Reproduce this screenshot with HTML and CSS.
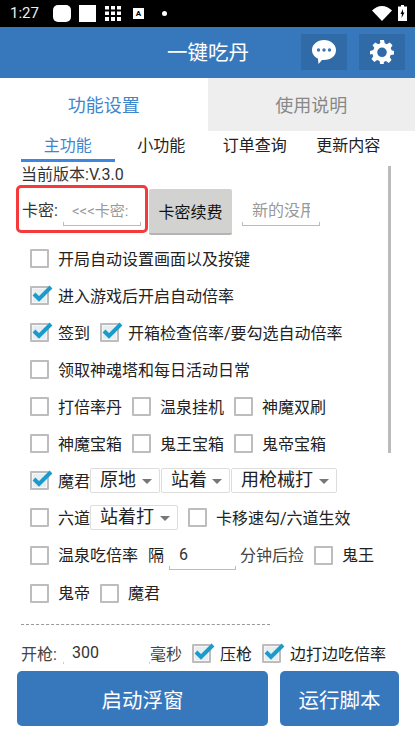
FILE: index.html
```html
<!DOCTYPE html>
<html lang="zh">
<head>
    <meta charset="UTF-8">
    <title>一键吃丹</title>
    <link rel="stylesheet" href="styles.css">
</head>
<body>
    <div id="app">
        <div class="status-bar">
            <span class="clock">1:27</span>
            <span class="st-round"></span>
            <span class="st-square"></span>
            <svg class="st-grid" width="16" height="15" viewBox="0 0 16 15">
                <path fill="#fff" d="M0 0h4v3.500H0zM6 0h4v3.500H6zM12 0h4v3.500h-4zM0 5.500h4V9H0zM6 5.500h4V9H6zM12 5.500h4V9h-4zM0 11h4v4H0zM6 11h4v4H6zM12 11h4v4h-4z"/>
            </svg>
            <span class="st-a">A</span>
            <span class="st-dot"></span>
            <span class="st-space"></span>
            <svg width="20" height="15" viewBox="0 0 20 15">
                <path fill="#fff" d="M0 4.500C2.800 1.800 6.200 0 10 0s7.200 1.800 10 4.500L10 15z"/>
            </svg>
            <svg class="st-batt" width="9" height="16" viewBox="0 0 9 16">
                <path fill="#fff" d="M3 0h3v1.500h3V16H0V1.500h3z"/>
                <path fill="#000" d="M5 4 2.500 9H4l-.5 4L6.500 7.500H5z"/>
            </svg>
        </div>

        <div class="app-bar">
            <div class="app-title">一键吃丹</div>
            <div class="app-btn msg-btn">
                <svg width="26" height="26" viewBox="0 0 26 26">
                    <path fill="#fff" d="M13 1c6.600 0 12 4.300 12 10.200S19.600 21 13 21c-.7 0-1.300 0-2-.1L7.500 25l-.6-5.400C3.400 17.800 1 14.800 1 11.200 1 5.300 6.400 1 13 1z"/>
                    <circle cx="7.500" cy="11" r="1.700" fill="#3778bd"/>
                    <circle cx="13" cy="11" r="1.700" fill="#3778bd"/>
                    <circle cx="18.500" cy="11" r="1.700" fill="#3778bd"/>
                </svg>
            </div>
            <div class="app-btn">
                <svg width="24" height="24" viewBox="0 0 24 24">
                    <path fill="#fff" fill-rule="evenodd" d="M10 0h4l.7 3.300 2.200.9L19.700 2.400l2.800 2.800-1.800 2.800.9 2.200L24 11v3.400l-3.300.7-.9 2.200 1.800 2.800-2.800 2.800-2.800-1.800-2.200.9L13.800 24h-3.600l-.7-3-2.400-.9-2.800 1.800-2.800-2.800 1.800-2.800-.9-2.200L0 14.400V11l3.400-1 .9-2.200-1.800-2.600 2.800-2.800 2.800 1.800 2.200-.9zM12 7.500a4.800 4.800 0 1 0 0 9.600 4.800 4.800 0 0 0 0-9.600z"/>
                </svg>
            </div>
        </div>

        <div class="tabs">
            <div class="tab active">功能设置</div>
            <div class="tab off">使用说明</div>
        </div>

        <div class="subtabs">
            <div class="subtab active">主功能</div>
            <div class="subtab">小功能</div>
            <div class="subtab">订单查询</div>
            <div class="subtab">更新内容</div>
        </div>

        <div class="panel">
            <div class="scrollbar"></div>
            <div class="version">当前版本:V.3.0</div>

            <div class="card-row">
                <div class="red-box">
                    <span>卡密:</span>
                    <span class="field field-card hint">&lt;&lt;&lt;卡密:</span>
                </div>
                <div class="renew">卡密续费</div>
                <span class="field field-new hint"><span class="clip">新的没用</span></span>
            </div>

            <div class="row"><i class="cb"></i><span>开局自动设置画面以及按键</span></div>
            <div class="row"><i class="cb on"></i><span>进入游戏后开启自动倍率</span></div>
            <div class="row">
                <i class="cb on"></i><span>签到</span>
                <i class="cb on"></i><span>开箱检查倍率/要勾选自动倍率</span>
            </div>
            <div class="row"><i class="cb"></i><span>领取神魂塔和每日活动日常</span></div>
            <div class="row">
                <i class="cb"></i><span class="w4">打倍率丹</span>
                <i class="cb"></i><span class="w4">温泉挂机</span>
                <i class="cb"></i><span>神魔双刷</span>
            </div>
            <div class="row">
                <i class="cb"></i><span class="w4">神魔宝箱</span>
                <i class="cb"></i><span class="w4">鬼王宝箱</span>
                <i class="cb"></i><span>鬼帝宝箱</span>
            </div>
            <div class="row">
                <i class="cb on"></i><span>魔君</span>
                <div class="selects">
                    <div class="sel s1">原地</div>
                    <div class="sel s2">站着</div>
                    <div class="sel s3">用枪械打</div>
                </div>
            </div>
            <div class="row">
                <i class="cb"></i><span>六道</span>
                <div class="selects">
                    <div class="sel s4">站着打</div>
                </div>
                <i class="cb cb-after"></i><span>卡移速勾/六道生效</span>
            </div>
            <div class="row row-38">
                <i class="cb"></i><span>温泉吃倍率</span>
                <span class="gap-l">隔</span>
                <span class="field field-num">6</span>
                <span class="muted">分钟后捡</span>
                <i class="cb"></i><span>鬼王</span>
            </div>
            <div class="row row-38">
                <i class="cb"></i><span>鬼帝</span>
                <i class="cb"></i><span>魔君</span>
            </div>

            <div class="divider"></div>

            <div class="row fire">
                <span class="muted">开枪:</span>
                <span class="field-fire">300</span>
                <span class="muted">毫秒</span>
                <i class="cb on"></i><span>压枪</span>
                <i class="cb on"></i><span>边打边吃倍率</span>
            </div>
        </div>

        <div class="actions">
            <div class="action wide">启动浮窗</div>
            <div class="action">运行脚本</div>
        </div>
    </div>
</body>
</html>
```

FILE: styles.css
```css
* {
    box-sizing: border-box;
}

body {
    margin: 0;
    background: #fff;
    color: #222;
    font-family: Roboto, "Noto Sans CJK SC", sans-serif;
    font-size: 16px;
}

#app {
    width: 415px;
    height: 736px;
    overflow: hidden;
    display: flex;
    flex-direction: column;
}

/* status bar */
.status-bar {
    flex: none;
    height: 27px;
    background: #000;
    color: #fff;
    display: flex;
    align-items: center;
    padding: 0 8px 1px 10px;
}

.clock {
    width: 43px;
    font-size: 15px;
    color: #eee;
}

.st-round {
    width: 18px;
    height: 17px;
    border-radius: 5px;
    background: #fff;
    margin-right: 8px;
}

.st-square {
    width: 17px;
    height: 17px;
    background: #fff;
    margin-right: 9px;
}

.st-a {
    width: 11px;
    height: 11px;
    margin-left: 12px;
    background: #fff;
    color: #000;
    font-size: 8px;
    font-weight: bold;
    line-height: 11px;
    text-align: center;
}

.st-dot {
    width: 5px;
    height: 5px;
    border-radius: 50%;
    background: #fff;
    margin-left: 18px;
}

.st-space {
    flex: 1;
}

.st-batt {
    margin-left: 6px;
}

/* header */
.app-bar {
    flex: none;
    height: 51px;
    background: #3778bd;
    display: flex;
    align-items: center;
    padding: 0 0 2px 167px;
}

.app-title {
    flex: none;
    width: 134px;
    color: #fff;
    font-size: 20.500px;
    padding-bottom: 2px;
}

.app-btn {
    flex: none;
    width: 46px;
    height: 36px;
    margin-right: 12px;
    background: #306ba8;
    display: flex;
    align-items: center;
    justify-content: center;
}

.app-btn:last-child {
    margin-right: 0;
}

.msg-btn svg {
    margin-top: 1px;
}

/* tabs */
.tabs {
    flex: none;
    height: 53px;
    display: flex;
}

.tab {
    flex: 1;
    font-size: 18px;
    display: flex;
    align-items: center;
    justify-content: center;
    padding-bottom: 1px;
}

.tab.active {
    color: #3f86cc;
}

.tab.off {
    background: #eeeeee;
    color: #888;
}

.subtabs {
    flex: none;
    height: 31px;
    padding-left: 21px;
    display: flex;
}

.subtab {
    flex: none;
    width: 93.500px;
    text-align: center;
    line-height: 29px;
    color: #222;
}

.subtab.active {
    color: #3f86cc;
    border-bottom: 3px solid #3f86e0;
}

/* main panel */
.panel {
    position: relative;
    flex: 1;
    min-height: 0;
    padding: 0 0 0 21px;
}

.scrollbar {
    position: absolute;
    left: 388px;
    top: 4px;
    width: 3px;
    height: 287px;
    background: #bbb;
}

.version {
    height: 23px;
    line-height: 25px;
    color: #333;
}

.card-row {
    height: 48px;
    display: flex;
    margin-bottom: 7px;
}

.red-box {
    flex: none;
    width: 132px;
    height: 48px;
    margin-left: -5px;
    padding: 0 0 0 3px;
    border: 3px solid #f43a3a;
    border-radius: 5px;
    display: flex;
    align-items: center;
    color: #333;
}

.field {
    display: block;
    position: relative;
    height: 26px;
    line-height: 22px;
    white-space: nowrap;
}

/* android style underline with small upturned ends */
.field::after {
    content: "";
    position: absolute;
    left: 0;
    right: 0;
    bottom: 0;
    height: 3px;
    border: 1px solid #bbb;
    border-top: 0;
}

.clip {
    display: block;
    width: 58px;
    overflow: hidden;
}

.field-card {
    flex: none;
    width: 78px;
    margin-left: 5px;
    margin-top: 7px;
    padding-left: 9px;
    font-size: 15px;
}

.hint {
    color: #999;
}

.renew {
    flex: none;
    width: 83px;
    height: 46px;
    margin: 4px 0 0 1px;
    background: #d2d2d0;
    border-bottom: 2px solid #b4b4b4;
    display: flex;
    align-items: center;
    justify-content: center;
    border-radius: 2px;
    color: #111;
}

.field-new {
    flex: none;
    width: 78px;
    margin: 15px 0 0 10px;
    padding-left: 10px;
}

.row {
    height: 37px;
    display: flex;
    align-items: center;
    padding-left: 9px;
}

.row span {
    padding-bottom: 2px;
}

.row-38 {
    height: 38px;
}

.cb {
    flex: none;
    width: 19px;
    height: 19px;
    margin-right: 9px;
    border: 2px solid #bdbdbd;
    border-radius: 1px;
    position: relative;
}

.row span + .cb {
    margin-left: 10px;
}

.cb.on {
    background: #e6eef1;
    box-shadow: inset 0 0 0 1px #f6f6f6;
}

/* the tick pokes out of the box, as in the original */
.cb.on::after {
    content: "";
    position: absolute;
    left: -2px;
    top: -3px;
    width: 24px;
    height: 20px;
    background: url("data:image/svg+xml,%3Csvg xmlns='http://www.w3.org/2000/svg' width='24' height='20'%3E%3Cpath fill='none' stroke='%231b9bcb' stroke-width='4' d='M4 9l5 5L21 2'/%3E%3C/svg%3E") no-repeat;
}

.w4 {
    flex: none;
    width: 64px;
    white-space: nowrap;
}

.selects {
    display: flex;
}

.sel {
    position: relative;
    height: 25px;
    margin-right: 1px;
    padding-left: 9px;
    font-size: 18px;
    line-height: 21px;
    border: 1px solid #ddd;
    border-radius: 2px;
}

.sel::after {
    content: "";
    position: absolute;
    right: 7px;
    top: 10px;
    border: 5px solid transparent;
    border-top: 5px solid #777;
    border-bottom: 0;
}

.s1 { width: 70px; }
.s2 { width: 69px; }
.s3 { width: 106px; }
.s4 { width: 88px; }

.selects + .cb-after {
    margin-left: 9px;
}

.gap-l {
    margin-left: 10px;
}

.field-num {
    width: 67px;
    height: 26px;
    margin: 4px 4px 0 5px;
    padding-left: 10px;
    color: #333;
}

.muted {
    color: #444;
}

.divider {
    flex: none;
    width: 249px;
    height: 12px;
    margin-top: 12px;
    border-top: 1px dashed #999;
}

.row.fire {
    height: 35px;
    padding-left: 0;
}

.field-fire {
    flex: none;
    position: relative;
    width: 87px;
    margin-left: 6px;
    padding-left: 9px;
    color: #333;
}

/* only the ends of the underline show on this field */
.field-fire::before,
.field-fire::after {
    content: "";
    position: absolute;
    bottom: 0;
    width: 1px;
    height: 2px;
    background: #ccc;
}

.field-fire::before {
    left: 0;
}

.field-fire::after {
    right: 0;
}

.row.fire span + .cb {
    margin-left: 10px;
}

.actions {
    flex: none;
    height: 65px;
    padding: 0 16px 10px 17px;
    display: flex;
    gap: 12px;
}

.action {
    width: 119px;
    background: #3778bd;
    color: #fff;
    font-size: 20.500px;
    border-radius: 5px;
    display: flex;
    align-items: center;
    justify-content: center;
}

.action.wide {
    width: 251px;
}
```
